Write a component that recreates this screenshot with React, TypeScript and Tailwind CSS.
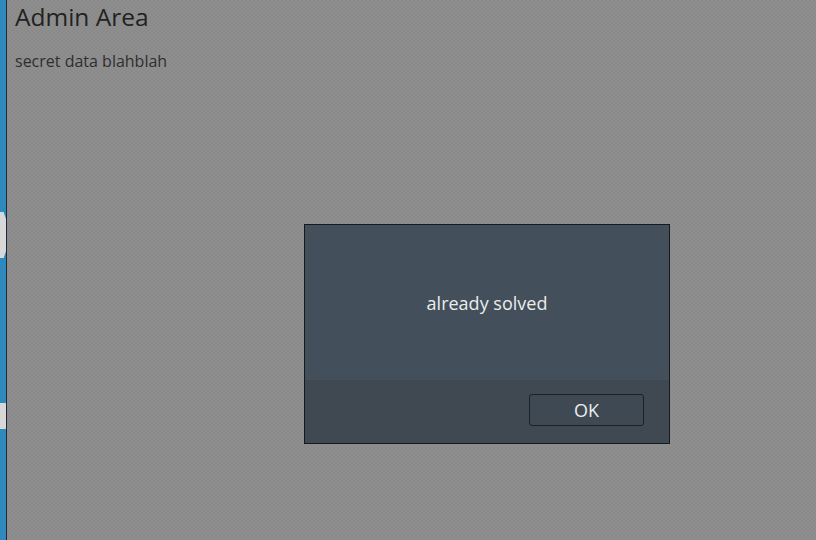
export default function App() {
  return (
    <div className="relative flex h-[540px] w-[816px] overflow-hidden bg-[#8d8d8d] font-['Open_Sans',sans-serif]">
      {/* left edge strip */}
      <div className="flex w-[6px] flex-col bg-[#2f89bd]">
        <div className="h-[212px]" />
        <div className="h-[46px] bg-[#d8d8d8] [clip-path:polygon(0_0,60%_0,100%_15%,100%_85%,60%_100%,0_100%)]" />
        <div className="h-[145px]" />
        <div className="h-[26px] bg-[#d8d8d8]" />
      </div>
      <div className="w-px bg-[#1d2a33]" />

      <main className="flex-1 bg-[repeating-conic-gradient(#8a8a8a_0_25%,#8e8e8e_0_50%)] bg-[length:4px_4px] px-2 pt-[1px]">
        <h1 className="text-[24.5px] font-medium leading-[32px] text-[#222]">Admin Area</h1>
        <p className="mt-[18px] text-[16px] leading-5 text-[#2e2e2e]">secret data blahblah</p>
      </main>

      {/* alert dialog */}
      <div className="absolute left-[304px] top-[224px] flex h-[220px] w-[366px] flex-col border border-[#151a1f] bg-[#434f5a]">
        <div className="flex h-[155px] items-center justify-center pt-[2px] text-[18px] text-[#ececec]">
          already solved
        </div>
        <div className="flex flex-1 items-center justify-end border-t border-[#3d4852] bg-[#404952] pr-[25px]">
          <button className="mb-[4px] h-[32px] w-[115px] rounded-[3px] border border-[#1b2127] bg-[#3e4953] text-[18px] text-[#ececec]">
            OK
          </button>
        </div>
      </div>
    </div>
  );
}
